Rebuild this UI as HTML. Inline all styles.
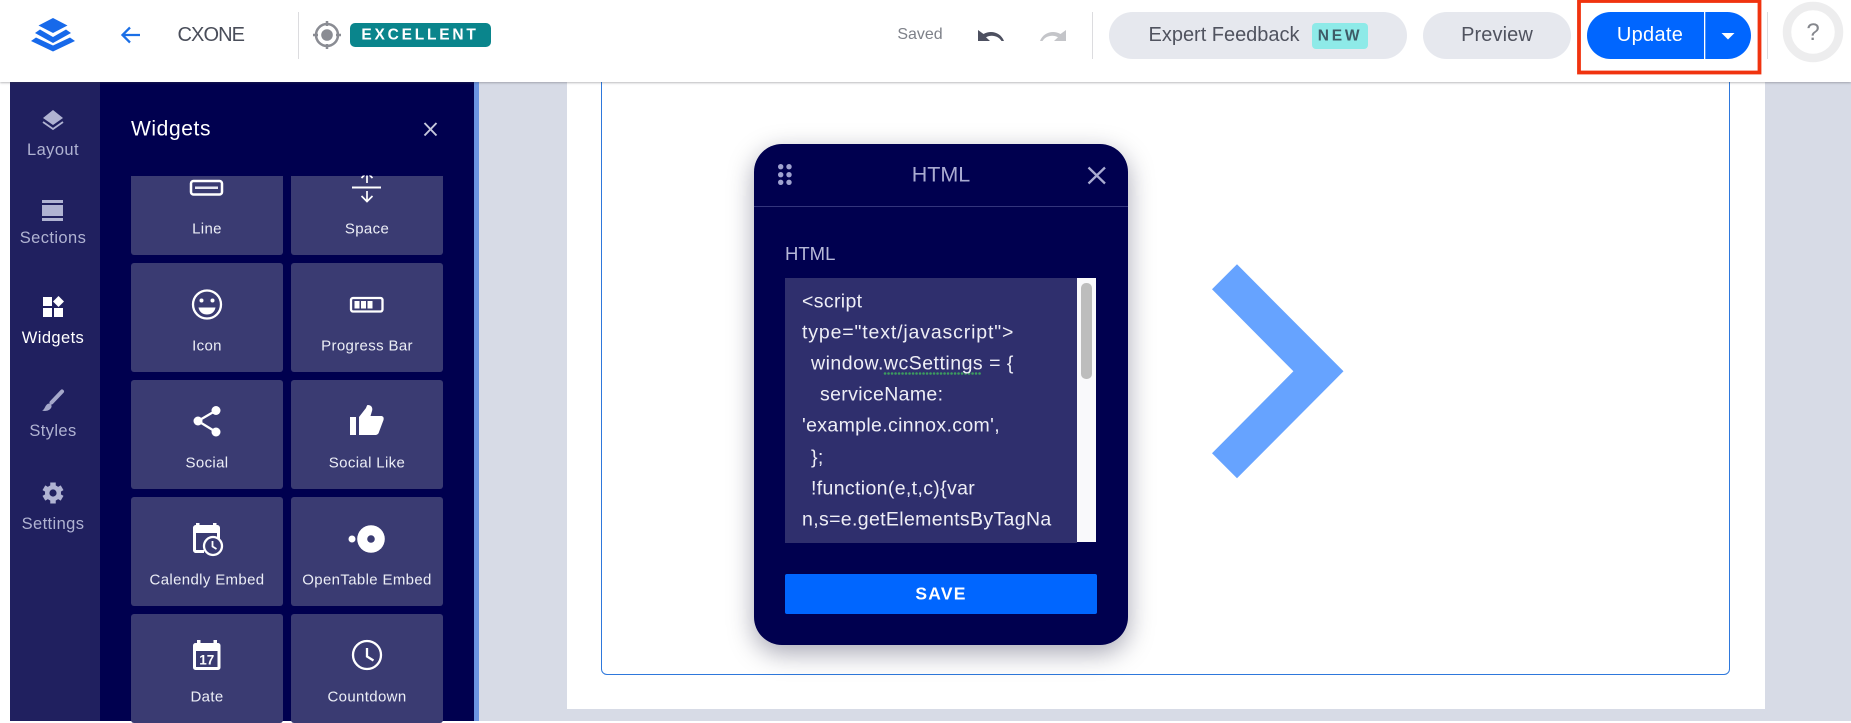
<!DOCTYPE html>
<html><head><meta charset="utf-8"><title>Editor</title>
<style>
html,body{margin:0;padding:0;width:1851px;height:721px;overflow:hidden;background:#fff;font-family:"Liberation Sans",sans-serif}
.a{position:absolute}
.t{position:absolute;transform:translate(-50%,-50%);white-space:nowrap;line-height:1}
.l{position:absolute;transform:translateY(-50%);white-space:nowrap;line-height:1}
.card{position:absolute;width:152px;height:109px;background:#3a3b72;border-radius:3px}
.cl{color:#eceef6;font-size:15px;letter-spacing:.35px}
.rl{color:#b0b3d2;font-size:16.5px;letter-spacing:.4px}
.code{color:#eeeef6;font-size:19.5px;letter-spacing:.35px}
</style></head><body>
<div class="a" style="left:479px;top:82px;width:1372px;height:639px;background:#d7dbe6"></div>
<div class="a" style="left:567px;top:82px;width:1198px;height:627px;background:#fff"></div>
<div class="a" style="left:601px;top:60px;width:1127px;height:613px;border:1.5px solid #2e78dc;border-radius:6px"></div>

<div class="a" style="left:10px;top:82px;width:90px;height:639px;background:#20205f"></div>
<div class="a" style="left:100px;top:82px;width:374px;height:639px;background:#00004f"></div>
<div class="a" style="left:474px;top:82px;width:5px;height:639px;background:#6b94e0"></div>

<div class="card" style="left:131px;top:146px"></div><div class="card" style="left:291px;top:146px"></div>
<div class="card" style="left:131px;top:263px"></div><div class="card" style="left:291px;top:263px"></div>
<div class="card" style="left:131px;top:380px"></div><div class="card" style="left:291px;top:380px"></div>
<div class="card" style="left:131px;top:497px"></div><div class="card" style="left:291px;top:497px"></div>
<div class="card" style="left:131px;top:614px"></div><div class="card" style="left:291px;top:614px"></div>
<div class="a" style="left:100px;top:82px;width:374px;height:93.5px;background:#00004f"></div>

<!-- header -->
<div class="a" style="left:0;top:0;width:1851px;height:82px;background:#fff;box-shadow:0 1px 2px rgba(60,60,70,.35)"></div>

<!-- modal -->
<div class="a" style="left:754px;top:144px;width:374px;height:501px;background:#00004f;border-radius:28px;box-shadow:0 8px 26px rgba(0,0,40,.35)"></div>
<div class="a" style="left:754px;top:206px;width:374px;height:1px;background:#33357c"></div>
<div class="a" style="left:785px;top:278px;width:292px;height:264.5px;background:#2f2f6d"></div>
<div class="a" style="left:1077px;top:278px;width:19px;height:264px;background:#f9f9fb"></div>
<div class="a" style="left:1081px;top:283px;width:11px;height:96px;background:#bdbdbd;border-radius:5px"></div>
<div class="a" style="left:785px;top:574px;width:312px;height:40px;background:#0066ff;border-radius:2px"></div>

<svg class="a" style="left:0;top:0" width="1851" height="721" viewBox="0 0 1851 721">
<defs><clipPath id="c"><rect x="291" y="175.5" width="152" height="40"/></clipPath></defs>
<!-- arrow -->
<polygon points="1237,264.3 1212,289.3 1293.4,371.3 1212,453.3 1237,478.3 1343.5,371.3" fill="#66a3ff"/>
<!-- logo -->
<g fill="#1769ea">
<polygon points="53,18 67.500,25.500 53,33 38.500,25.500"/>
<polygon points="40,29.500 53,37 66,29.500 71,33 53,43 35,33"/>
<polygon points="36,37.500 53,45.500 70,37.500 75,41 53,51.500 31,41"/>
</g>
<!-- back -->
<path d="M140 35H123M130 27.500L122.500 35L130 42.500" fill="none" stroke="#1b6fe6" stroke-width="2.300"/>
<rect x="298" y="12" width="1" height="47" fill="#dcdcdf"/>
<!-- target -->
<circle cx="327" cy="35" r="11" fill="none" stroke="#8a8c93" stroke-width="2.500"/>
<circle cx="327" cy="35" r="5.800" fill="#8a8c93"/>
<path d="M327 21v5M327 44v5M313 35h5M336 35h5" stroke="#8a8c93" stroke-width="2.500"/>
<rect x="350" y="23" width="141" height="24" rx="5" fill="#0a858c"/>
<!-- undo -->
<path d="M978 30V41H990L986 37.200C991 34.500 998 35.500 1001.500 41H1004C1001 33 991.500 29.500 983.500 34Z" fill="#4d5060"/>
<path d="M1066 30V41H1054L1058 37.200C1053 34.500 1046 35.500 1042.500 41H1040C1043 33 1052.500 29.500 1060.500 34Z" fill="#c4c5c9"/>
<rect x="1092" y="12" width="1" height="47" fill="#dcdcdf"/>
<!-- pills -->
<rect x="1109" y="12" width="298" height="47" rx="23.500" fill="#e6e8ee"/>
<rect x="1312" y="23" width="56" height="26" rx="4" fill="#8eeae8"/>
<rect x="1423" y="12" width="148" height="47" rx="23.500" fill="#e6e8ee"/>
<rect x="1587" y="12" width="164" height="47" rx="23.500" fill="#0066ff"/>
<rect x="1704" y="12" width="1.300" height="47" fill="#fff"/>
<polygon points="1721.500,33 1734.500,33 1728,39.500" fill="#fff"/>
<rect x="1579" y="1" width="180.500" height="71.500" fill="none" stroke="#f0330f" stroke-width="3.800"/>
<rect x="1767" y="12" width="1" height="47" fill="#dcdcdf"/>
<circle cx="1813" cy="32" r="26" fill="#fff" stroke="#ededee" stroke-width="8.500"/>
<!-- rail icons -->
<g fill="#b0b3d2">
<polygon points="53,110 63,118 53,125 43,118"/>
<path d="M43 122L53 129L63 122" fill="none" stroke="#b0b3d2" stroke-width="1.800"/>
<rect x="42" y="200" width="21" height="3"/><rect x="42" y="205" width="21" height="11"/><rect x="42" y="218" width="21" height="3"/>
</g>
<g fill="#fff">
<rect x="43" y="297" width="9" height="9"/><rect x="43" y="308" width="9" height="9"/><rect x="54" y="308" width="9" height="9"/>
<polygon points="58.500,296 64,301.500 58.500,307 53,301.500"/>
</g>
<path d="M62 391.500L51.500 402.500" stroke="#a5a8ca" stroke-width="4" stroke-linecap="round"/>
<path d="M42 410.500C45 410 45 404 49 403.500C51 403.500 52.500 406 51 408C49 411 45 411.500 42 410.500Z" fill="#a5a8ca"/>
<g fill="#b0b3d2"><circle cx="53" cy="493" r="8"/>
<g stroke="#b0b3d2" stroke-width="5.500"><path d="M53 482.500v21"/><path d="M43.900 487.700L62.100 498.300"/><path d="M43.900 498.300L62.100 487.700"/></g></g>
<circle cx="53" cy="493" r="3.600" fill="#20205f"/>
<!-- panel close -->
<path d="M424.500 123L436.500 135.500M436.500 123L424.500 135.500" stroke="#c5c7dc" stroke-width="1.900"/>
<!-- line / space -->
<rect x="191" y="181" width="31" height="13.500" rx="2.500" fill="none" stroke="#fff" stroke-width="2.500"/>
<rect x="195" y="186.500" width="23" height="2.500" fill="#e8e9f2"/>
<g clip-path="url(#c)" fill="none" stroke="#fff" stroke-width="1.700">
<path d="M352 187.500H381" stroke-width="2"/>
<path d="M367 170V183M361.500 178L367 172.500L372.500 178"/>
</g>
<path d="M367 191V201.500M361.500 196L367 201.500L372.500 196" fill="none" stroke="#fff" stroke-width="1.700"/>
<!-- smiley -->
<circle cx="207" cy="304.500" r="14" fill="none" stroke="#fff" stroke-width="2.300"/>
<circle cx="201.500" cy="300.500" r="2" fill="#fff"/><circle cx="212.500" cy="300.500" r="2" fill="#fff"/>
<path d="M198.500 307.500H215.500C214.500 312.500 211 314.500 207 314.500C203 314.500 199.500 312.500 198.500 307.500Z" fill="#fff"/>
<!-- progress -->
<rect x="351" y="298" width="31.500" height="13.500" rx="2" fill="none" stroke="#fff" stroke-width="2.300"/>
<rect x="354.500" y="301" width="5" height="7.500" fill="#fff"/><rect x="361" y="301" width="5" height="7.500" fill="#fff"/><rect x="367.500" y="301" width="5" height="7.500" fill="#fff"/>
<!-- social -->
<path d="M216 410.500L198 421L216 432" fill="none" stroke="#fff" stroke-width="2.300"/>
<circle cx="216" cy="410.500" r="4.500" fill="#fff"/><circle cx="198" cy="421" r="4.500" fill="#fff"/><circle cx="216" cy="432" r="4.500" fill="#fff"/>
<!-- like -->
<rect x="350" y="417" width="6" height="18" fill="#fff"/>
<path d="M359 417L366 408C367 405.500 367 405 368 405C371.500 405 373 408 372 411L370.500 416H381C383.500 416 384 418 383.500 420L379 432C378.500 434 377 435 375 435H359Z" fill="#fff"/>
<!-- calendly -->
<rect x="196" y="523" width="3.500" height="5" fill="#fff"/><rect x="213" y="523" width="3.500" height="5" fill="#fff"/>
<path d="M193 528C193 526 194.500 525 196 525H217C218.500 525 220 526 220 528V541H217V533H196V550H204V553H196C194.500 553 193 552 193 550Z" fill="#fff"/>
<circle cx="213" cy="546" r="9" fill="#3a3b72" stroke="#fff" stroke-width="2.300"/>
<path d="M212.500 541V546.500L216.500 549" fill="none" stroke="#fff" stroke-width="1.800"/>
<!-- opentable -->
<circle cx="352" cy="539" r="3.500" fill="#fff"/>
<circle cx="371" cy="539" r="13.800" fill="#fff"/><circle cx="371" cy="539" r="3.800" fill="#3a3b72"/>
<!-- date -->
<rect x="197" y="640" width="3.500" height="6" fill="#fff"/><rect x="213.500" y="640" width="3.500" height="6" fill="#fff"/>
<rect x="193" y="643" width="27.500" height="27" rx="2.500" fill="#fff"/>
<rect x="196" y="651" width="21.500" height="16" fill="#3a3b72"/>
<text x="206.800" y="664.500" font-family="Liberation Sans,sans-serif" font-size="13.500" font-weight="700" fill="#fff" text-anchor="middle">17</text>
<!-- countdown -->
<circle cx="367" cy="655" r="14" fill="none" stroke="#fff" stroke-width="2.300"/>
<path d="M367 648V656.500L373.500 660.500" fill="none" stroke="#fff" stroke-width="2.300"/>
<!-- modal icons -->
<g fill="#a0a3d0"><circle cx="780.700" cy="166.700" r="2.700"/><circle cx="789" cy="166.700" r="2.700"/><circle cx="780.700" cy="174.700" r="2.700"/><circle cx="789" cy="174.700" r="2.700"/><circle cx="780.700" cy="182.300" r="2.700"/><circle cx="789" cy="182.300" r="2.700"/></g>
<path d="M1088.500 167.500L1105 183.500M1105 167.500L1088.500 183.500" stroke="#a9abd1" stroke-width="2.300"/>
<path d="M885 373.500H982" stroke="#3d9c5f" stroke-width="2.500" stroke-linecap="round" stroke-dasharray=".1 3.400"/>
</svg>

<!-- header text -->
<div class="l" style="left:177.500px;top:35px;font-size:20px;color:#4a4e5a;letter-spacing:-.9px">CXONE</div>
<div class="t" style="left:420px;top:35px;font-size:15.500px;font-weight:700;color:#fff;letter-spacing:2.800px">EXCELLENT</div>
<div class="t" style="left:920px;top:35px;font-size:16px;color:#7e8189">Saved</div>
<div class="t" style="left:1224px;top:35px;font-size:20px;color:#50535f;letter-spacing:-.02px">Expert Feedback</div>
<div class="t" style="left:1340px;top:36px;font-size:15.500px;font-weight:700;color:#3e5a66;letter-spacing:2.800px">NEW</div>
<div class="t" style="left:1497px;top:35px;font-size:20px;color:#50535f;letter-spacing:.1px">Preview</div>
<div class="t" style="left:1650px;top:35px;font-size:20px;color:#fff;letter-spacing:.3px">Update</div>
<div class="t" style="left:1813px;top:33px;font-size:24px;color:#85878d">?</div>

<!-- rail -->
<div class="t rl" style="left:53px;top:149.500px">Layout</div>
<div class="t rl" style="left:53px;top:238px">Sections</div>
<div class="t rl" style="left:53px;top:337.500px;color:#fff">Widgets</div>
<div class="t rl" style="left:53px;top:430.500px">Styles</div>
<div class="t rl" style="left:53px;top:524px">Settings</div>
<div class="l" style="left:131px;top:129px;font-size:21px;color:#fff;letter-spacing:.6px">Widgets</div>

<!-- cards -->
<div class="t cl" style="left:207px;top:229px">Line</div><div class="t cl" style="left:367px;top:229px">Space</div>
<div class="t cl" style="left:207px;top:346px">Icon</div><div class="t cl" style="left:367px;top:346px">Progress Bar</div>
<div class="t cl" style="left:207px;top:463px">Social</div><div class="t cl" style="left:367px;top:463px">Social Like</div>
<div class="t cl" style="left:207px;top:580px">Calendly Embed</div><div class="t cl" style="left:367px;top:580px">OpenTable Embed</div>
<div class="t cl" style="left:207px;top:697px">Date</div><div class="t cl" style="left:367px;top:697px">Countdown</div>

<!-- modal text -->
<div class="t" style="left:941px;top:175px;font-size:21.500px;color:#a9abd1">HTML</div>
<div class="l" style="left:785px;top:254px;font-size:18.500px;color:#b6b8d8">HTML</div>
<div class="l code" style="left:802px;top:302px">&lt;script</div>
<div class="l code" style="left:802px;top:333px;letter-spacing:.85px">type="text/javascript"&gt;</div>
<div class="l code" style="left:811px;top:364px;letter-spacing:.5px">window.wcSettings = {</div>
<div class="l code" style="left:820px;top:395px">serviceName:</div>
<div class="l code" style="left:802px;top:426px">'example.cinnox.com',</div>
<div class="l code" style="left:811px;top:458px">};</div>
<div class="l code" style="left:811px;top:489px">!function(e,t,c){var</div>
<div class="l code" style="left:802px;top:520px">n,s=e.getElementsByTagNa</div>
<div class="t" style="left:941px;top:594px;font-size:17.500px;font-weight:700;color:#fff;letter-spacing:1.200px">SAVE</div>
</body></html>
